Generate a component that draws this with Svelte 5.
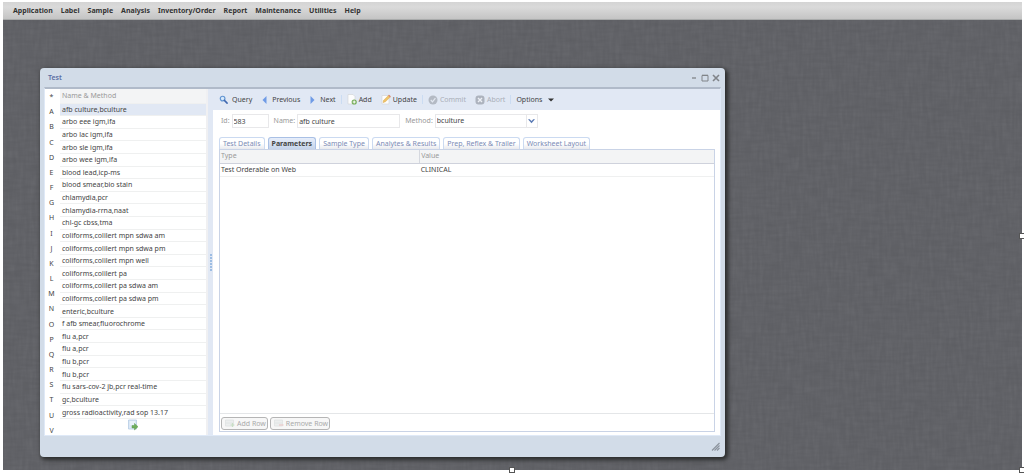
<script lang="ts">
const menus = [
	"Application",
	"Label",
	"Sample",
	"Analysis",
	"Inventory/Order",
	"Report",
	"Maintenance",
	"Utilities",
	"Help",
];

const letters = ["*", ..."ABCDEFGHIJKLMNOPQRSTUV"];

const tests = [
	"afb culture,bculture",
	"arbo eee igm,ifa",
	"arbo lac igm,ifa",
	"arbo sle igm,ifa",
	"arbo wee igm,ifa",
	"blood lead,icp-ms",
	"blood smear,bio stain",
	"chlamydia,pcr",
	"chlamydia-rrna,naat",
	"chl-gc cbss,tma",
	"coliforms,colilert mpn sdwa am",
	"coliforms,colilert mpn sdwa pm",
	"coliforms,colilert mpn well",
	"coliforms,colilert pa",
	"coliforms,colilert pa sdwa am",
	"coliforms,colilert pa sdwa pm",
	"enteric,bculture",
	"f afb smear,fluorochrome",
	"flu a,pcr",
	"flu a,pcr",
	"flu b,pcr",
	"flu b,pcr",
	"flu sars-cov-2 jb,pcr real-time",
	"gc,bculture",
	"gross radioactivity,rad sop 13.17",
];

const tabs = [
	"Test Details",
	"Parameters",
	"Sample Type",
	"Analytes & Results",
	"Prep, Reflex & Trailer",
	"Worksheet Layout",
];

let selected = $state(0);
let activeTab = $state("Parameters");
let id = $state("583");
let name = $state("afb culture");
let method = $state("bculture");
</script>

<div class="screen">
	<nav class="menuBar">
		{#each menus as menu}
			<button type="button">{menu}</button>
		{/each}
	</nav>

	<main class="desktop">
		<svg class="weave" aria-hidden="true">
			<filter id="warp" x="0" y="0" width="100%" height="100%">
				<feTurbulence type="fractalNoise" baseFrequency="0.3 0.05" numOctaves="2" seed="3" />
				<feColorMatrix values="0 0 0 0 1  0 0 0 0 1  0 0 0 0 1  0.5 0 0 0 -0.16" />
			</filter>
			<filter id="weft" x="0" y="0" width="100%" height="100%">
				<feTurbulence type="fractalNoise" baseFrequency="0.05 0.3" numOctaves="2" seed="8" />
				<feColorMatrix values="0 0 0 0 0  0 0 0 0 0  0 0 0 0 0  0.5 0 0 0 -0.14" />
			</filter>
			<rect width="100%" height="100%" filter="url(#warp)" />
			<rect width="100%" height="100%" filter="url(#weft)" />
		</svg>

		<section class="window" aria-label="Test">
			<header class="titleBar">
				<h1>Test</h1>
				<button type="button" aria-label="Minimize">
					<svg width="8" height="8" viewBox="0 0 8 8"><path d="M2 4h4" stroke-width="1.3" /></svg>
				</button>
				<button type="button" aria-label="Maximize">
					<svg width="8" height="8" viewBox="0 0 8 8"><path d="M1 1.5h6v5.5h-6zM1 1.2h6" stroke-width="1" /></svg>
				</button>
				<button type="button" aria-label="Close">
					<svg width="8" height="8" viewBox="0 0 8 8"><path d="M1 1l6 6M7 1l-6 6" stroke-width="1.6" /></svg>
				</button>
			</header>

			<div class="body">
				<div class="letters">
					{#each letters as letter}
						<button type="button">{letter}</button>
					{/each}
				</div>

				<div class="list">
					<table>
						<thead>
							<tr><th>Name &amp; Method</th></tr>
						</thead>
						<tbody>
							{#each tests as test, i}
								<tr class:selected={i === selected} onclick={() => (selected = i)}>
									<td>{test}</td>
								</tr>
							{/each}
						</tbody>
					</table>
					<button class="nextPage" type="button" aria-label="Next page">
						<svg width="12" height="12" viewBox="0 0 12 12">
							<path d="M1.5 1h8v9h-8z" fill="#dbe8f6" stroke="#b5cbe4" stroke-width=".8" />
							<path d="M3 3h5M3 5h4" stroke="#f7fbff" />
							<path d="M5 6.5h2.500v-2l3.500 3.200-3.500 3.200v-2h-2.500z" fill="#6fae5c" stroke="#5d9d52" stroke-width=".5" />
						</svg>
					</button>
				</div>

				<div class="splitter"><i></i><i></i><i></i><i></i><i></i><i></i></div>

				<div class="detail">
					<div class="toolbar">
						<button class="query" type="button">
							<svg width="9" height="9" viewBox="0 0 10 10">
								<circle cx="4" cy="4" r="2.6" fill="#d7e9fb" stroke="#6295d2" stroke-width="1.3" />
								<path d="M6 6l3 3" stroke="#3f68b0" stroke-width="1.7" stroke-linecap="round" />
							</svg>
							Query
						</button>
						<button class="arrow" type="button">
							<svg width="5" height="8" viewBox="0 0 5 8"><path d="M4.5 0v8L.5 4z" fill="#6f9be6" /></svg>
							Previous
						</button>
						<button class="arrow" type="button">
							<svg width="5" height="8" viewBox="0 0 5 8"><path d="M.5 0v8l4-4z" fill="#6f9be6" /></svg>
							Next
						</button>
						<span class="sep"></span>
						<button type="button">
							<svg width="10" height="11" viewBox="0 0 10 11">
								<path d="M1 .5h5l2 2v7.5h-7z" fill="#fdfdfd" stroke="#d4d6d8" stroke-width=".7" />
								<circle cx="7.2" cy="8" r="2.6" fill="#76ad59" />
								<path d="M7.2 6.5v3M5.7 8h3" stroke="#fff" />
							</svg>
							Add
						</button>
						<button type="button">
							<svg width="10" height="11" viewBox="0 0 10 11">
								<path d="M1 1.5h7v8.5h-7z" fill="#fdfdfd" stroke="#d4d6d8" stroke-width=".7" />
								<path d="M2 8.5l.7-2.3 5-5 1.7 1.6-5 5z" fill="#efc469" stroke="#dba64b" stroke-width=".5" />
								<path d="M7.7 1.2l1.7 1.6" stroke="#d98478" stroke-width="1.2" />
							</svg>
							Update
						</button>
						<span class="sep"></span>
						<button type="button" disabled>
							<svg width="10" height="10" viewBox="0 0 10 10">
								<circle cx="5" cy="5" r="4.5" fill="#b4bac4" />
								<path d="M2.8 5l1.7 1.8 2.9-3.600" fill="none" stroke="#e3e8f1" stroke-width="1.2" />
							</svg>
							Commit
						</button>
						<button type="button" disabled>
							<svg width="10" height="10" viewBox="0 0 10 10">
								<rect x=".5" y=".5" width="9" height="9" rx="3" fill="#adb3be" />
								<path d="M3 3l4 4M7 3l-4 4" stroke="#edf0f6" stroke-width="1.4" />
							</svg>
							Abort
						</button>
						<span class="sep"></span>
						<button class="options" type="button">
							Options
							<svg width="6" height="4" viewBox="0 0 6 4"><path d="M0 .5h6l-3 3z" fill="#333" /></svg>
						</button>
					</div>

					<form class="fields">
						<label for="testId">Id:</label>
						<input id="testId" class="idField" bind:value={id} />
						<label for="testName">Name:</label>
						<input id="testName" class="nameField" bind:value={name} />
						<label for="testMethod">Method:</label>
						<div class="methodField">
							<select id="testMethod" bind:value={method}>
								<option>bculture</option>
								<option>ifa</option>
								<option>pcr</option>
							</select>
							<span class="drop" aria-hidden="true">
								<svg width="7" height="5" viewBox="0 0 8 5"><path d="M0 0h2l2 1.8 2-1.8h2l-4 4.5z" fill="#5a7ab5" /></svg>
							</span>
						</div>
					</form>

					<div class="tabs" role="tablist">
						{#each tabs as tab}
							<button
								type="button"
								role="tab"
								aria-selected={tab === activeTab}
								class:active={tab === activeTab}
								onclick={() => (activeTab = tab)}>{tab}</button
							>
						{/each}
					</div>

					<div class="panel">
						<table class="params">
							<thead>
								<tr><th>Type</th><th>Value</th></tr>
							</thead>
							<tbody>
								<tr><td>Test Orderable on Web</td><td>CLINICAL</td></tr>
							</tbody>
						</table>
						<div class="rowActions">
							<button type="button" disabled>
								<svg width="10" height="9" viewBox="0 0 10 9">
									<path d="M.5 1h8v6h-8zM.5 4h8" fill="#eceeee" stroke="#dfe2e2" stroke-width=".8" />
									<path d="M7.5 4v4M5.5 6h4" stroke="#c9dfc5" stroke-width="1.2" />
								</svg>
								Add Row
							</button>
							<button type="button" disabled>
								<svg width="10" height="9" viewBox="0 0 10 9">
									<path d="M.5 1h8v6h-8zM.5 4h8" fill="#eceeee" stroke="#dfe2e2" stroke-width=".8" />
									<path d="M5 6h4.5" stroke="#ecc9c9" stroke-width="1.2" />
								</svg>
								Remove Row
							</button>
						</div>
					</div>
				</div>
			</div>

			<footer class="statusBar">
				<svg width="9" height="9" viewBox="0 0 9 9" aria-hidden="true">
					<path d="M1 8.5l7.5-7.5M3.5 8.5l5-5M6 8.5l2.5-2.5" stroke="#8d949e" stroke-width="1.2" />
				</svg>
			</footer>
		</section>
	</main>

	<span class="handle right"></span>
	<span class="handle bottom"></span>
	<span class="handle corner"></span>
</div>

<style>
	:global(body) {
		background: #fff;
	}

	.screen,
	.screen * {
		box-sizing: border-box;
	}

	.screen {
		position: relative;
		display: flex;
		flex-direction: column;
		min-height: 100vh;
		padding: 2px 2px 3px 3px;
		overflow: hidden;
		font: 7px/12px "Noto Sans", "Open Sans", sans-serif;
		color: #444;
	}

	button,
	input,
	select {
		margin: 0;
		padding: 0;
		border: 0;
		background: none;
		font: inherit;
		color: inherit;
	}

	svg {
		flex: none;
	}

	.menuBar {
		display: flex;
		align-items: center;
		gap: 8px;
		height: 18px;
		padding: 0 10px;
		background: linear-gradient(#d4d4d4, #dadada 30%, #c4c4c4);
		border-bottom: 1px solid #a9abab;
		font-weight: 700;
		color: #333;
	}

	.desktop {
		position: relative;
		flex: 1;
		padding: 48px 37px 13px;
		background: #616267;
	}

	.weave {
		position: absolute;
		inset: 0;
		width: 100%;
		height: 100%;
		opacity: 0.14;
	}

	.window {
		position: relative;
		width: 72.5%;
		min-width: 600px;
		background: #d2dce8;
		border-radius: 4px;
		box-shadow: 2px 2px 4px 1px #2b2c2c;
	}

	.titleBar {
		display: flex;
		align-items: center;
		gap: 3px;
		height: 19px;
		padding: 0 5px 0 8px;
	}

	.titleBar h1 {
		flex: 1;
		margin: 0;
		font-size: 7px;
		font-weight: 600;
		color: #5a6da3;
	}

	.titleBar button {
		height: 8px;
	}

	.titleBar svg {
		display: block;
		fill: none;
		stroke: #808489;
	}

	.body {
		display: flex;
		margin: 0 4px;
		border: 1px solid #dfe9f7;
		border-top: 2px solid #b0bac9;
		background: #fff;
	}

	.letters {
		display: flex;
		flex-direction: column;
		justify-content: space-between;
		width: 15px;
		padding: 4px 2px 0 0;
	}

	.letters button {
		height: 8px;
		line-height: 8px;
	}

	.list {
		display: flex;
		flex-direction: column;
		align-items: center;
		width: 148px;
		padding-bottom: 4px;
		border-right: 2px solid #f0f0f2;
	}

	table {
		border-collapse: collapse;
		width: 100%;
	}

	th,
	td {
		padding: 0 2px;
		border-bottom: 1px solid #eff0f0;
		text-align: left;
		white-space: nowrap;
	}

	th {
		background: #f3f4f5;
		font-weight: 400;
		color: #999;
	}

	.list table {
		height: 330px;
	}

	.list td,
	.list th {
		line-height: 11px;
	}

	.list th {
		height: 14px;
	}

	.list .selected td {
		background: #e1e8f4;
	}

	.nextPage {
		height: 12px;
	}

	.nextPage svg {
		display: block;
	}

	.splitter {
		display: flex;
		flex-direction: column;
		align-items: center;
		justify-content: center;
		gap: 1px;
		width: 5px;
		background: #e1e8f4;
	}

	.splitter i {
		width: 2px;
		height: 2px;
		background: #9dbde3;
	}

	.detail {
		display: flex;
		flex: 1;
		flex-direction: column;
		min-width: 0;
	}

	.toolbar {
		display: flex;
		align-items: center;
		gap: 9px;
		height: 21px;
		padding: 0 6px;
		background: #e1e8f4;
	}

	.toolbar button {
		display: flex;
		align-items: center;
		gap: 2px;
	}

	.toolbar .query {
		gap: 4px;
	}

	.toolbar .arrow {
		gap: 5px;
		padding-left: 1px;
	}

	.toolbar .options {
		gap: 6px;
	}

	.toolbar button:disabled {
		color: #aaafb8;
	}

	.sep {
		width: 1px;
		height: 9px;
		margin: 0 -4px;
		background: #cbdcf2;
	}

	.fields {
		display: flex;
		align-items: center;
		gap: 2px;
		padding: 4px 8px 9px;
		color: #999;
	}

	.fields input,
	.methodField {
		height: 14px;
		margin-right: 3px;
		padding: 0 1px;
		border: 1px solid #e8e8ea;
		background: #fff;
		color: #444;
	}

	.idField {
		width: 37px;
	}

	.nameField {
		width: 103px;
	}

	.methodField {
		position: relative;
		width: 103px;
	}

	.methodField select {
		display: block;
		width: 100%;
		height: 12px;
		appearance: none;
	}

	.drop {
		position: absolute;
		top: 0;
		right: 0;
		display: grid;
		place-items: center;
		width: 11px;
		height: 12px;
		border-left: 1px solid #e8e8ea;
		pointer-events: none;
	}

	.tabs {
		display: flex;
		gap: 3px;
		padding: 0 6px;
	}

	.tabs button {
		height: 12px;
		padding: 0 3px;
		border: 1px solid #cbdaf1;
		border-bottom: 0;
		border-radius: 3px 3px 0 0;
		background: linear-gradient(#fff 50%, #e9eaee);
		color: #7b8bb5;
		white-space: nowrap;
	}

	.tabs .active {
		background: linear-gradient(#e7eefa, #c5d3ea);
		border-color: #a9c0e5;
		font-weight: 700;
		color: #444;
	}

	.panel {
		display: flex;
		flex: 1;
		flex-direction: column;
		margin: 0 5px 3px 6px;
		border: 1px solid #c9d3e6;
	}

	.params {
		table-layout: fixed;
	}

	.params th,
	.params td {
		height: 13px;
		padding: 0 1px;
	}

	.params th:first-child {
		width: 40.4%;
		border-right: 1px solid #d5d8df;
	}

	.params th {
		border-bottom-color: #cfd2dc;
	}

	.rowActions {
		display: flex;
		gap: 2px;
		margin-top: auto;
		padding: 3px 1px 1px;
		border-top: 1px solid #e4e6e8;
	}

	.rowActions button {
		display: flex;
		align-items: center;
		gap: 2px;
		height: 13px;
		padding: 0 1px 0 3px;
		border: 1px solid #b5b5b5;
		border-radius: 3px;
		background: #f7f7f7;
		color: #aaa;
	}

	.statusBar {
		display: flex;
		align-items: center;
		justify-content: flex-end;
		height: 21px;
		padding: 0 5px;
	}

	/* resize grips of the outer frame */
	.handle {
		position: absolute;
		width: 6px;
		height: 6px;
		border: 1px solid #555;
		background: #fff;
	}

	.right {
		top: 50%;
		right: -1px;
		margin-top: -4px;
	}

	.bottom {
		bottom: 0;
		left: 50%;
		margin-left: -3px;
	}

	.corner {
		right: -1px;
		bottom: 0;
	}
</style>
